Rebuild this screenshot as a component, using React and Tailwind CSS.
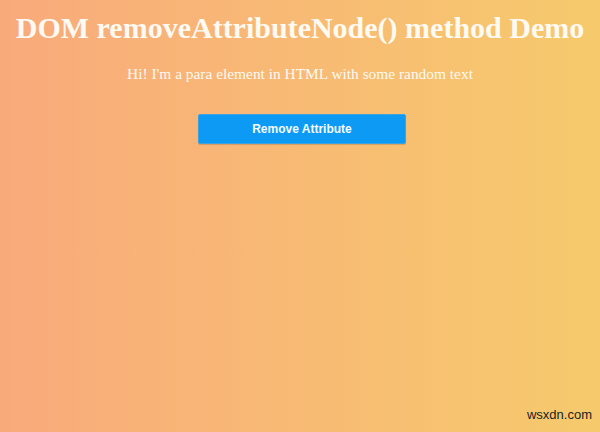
import React from 'react';

const App = () => {
  return (
    <div className="relative w-[600px] h-[432px] overflow-hidden bg-gradient-to-r from-[#f9aa7b] to-[#f6ca6c]">
      <div className="flex flex-col items-center pt-[10px] font-['Liberation_Serif',serif] text-[#fffaf2]">
        <h1 className="text-[30px] font-bold leading-[36px] whitespace-nowrap">DOM removeAttributeNode() method Demo</h1>
        <p className="mt-[19px] text-[15.4px] leading-[18px]">Hi! I'm a para element in HTML with some random text</p>
        <button className="mt-[31px] ml-[4px] w-[208px] h-[30px] bg-[#0c9af5] border border-[#3aa3e0] rounded-[2px] shadow-[0_1px_1px_rgba(0,0,0,0.15)] font-['Liberation_Sans',sans-serif] text-[12px] font-bold text-[#f4faff]">
          Remove Attribute
        </button>
      </div>
      <span className="absolute right-[8px] bottom-[8px] font-['Liberation_Sans',sans-serif] text-[13px] text-[#222]">wsxdn.com</span>
    </div>
  );
};

export default App;
